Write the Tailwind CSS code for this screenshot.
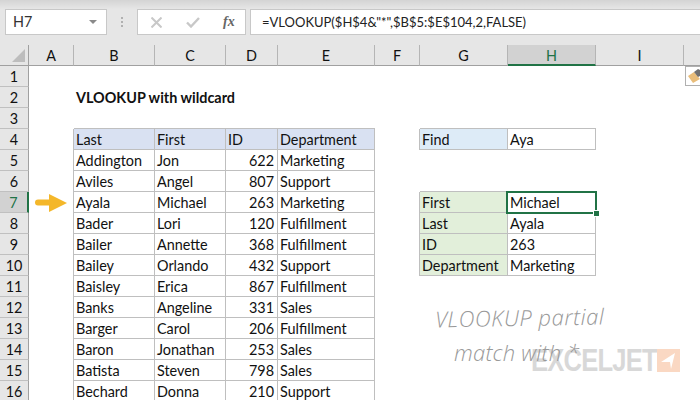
<!DOCTYPE html>
<html><head><meta charset="utf-8"><script src="https://cdn.jsdelivr.net/npm/@tailwindcss/browser@4"></script></head>
<body class="bg-white">
<div class="relative w-[700px] h-[400px] overflow-hidden bg-white text-[#111] font-['Lato','Liberation_Sans',sans-serif] text-[14.4px] leading-[22px]">
  <div class="h-[45px] bg-[#e6e6e6] flex items-start pt-[9px] pl-[5px] gap-[4px] relative">
    <div class="absolute left-0 top-0 w-full h-[9px] bg-gradient-to-b from-[#d4d4d4] to-[#e6e6e6]"></div>
    <div class="relative w-[102px] h-[26px] bg-white border border-[#c8c8c8] flex items-center justify-between pl-[7px] pr-[7px] text-[#333]"><span>H7</span><span class="w-0 h-0 border-l-[4px] border-r-[4px] border-t-[4px] border-l-transparent border-r-transparent border-t-[#8a8a8a] mr-[2px]"></span></div>
    <div class="w-[22px] h-[26px] flex flex-col items-center justify-center gap-[2px]"><i class="w-[2px] h-[2px] bg-[#b0b0b0]"></i><i class="w-[2px] h-[2px] bg-[#b0b0b0]"></i><i class="w-[2px] h-[2px] bg-[#b0b0b0]"></i></div>
    <div class="w-[109px] h-[26px] bg-white border border-[#c8c8c8] flex items-center relative">
      <svg class="absolute left-[13px] top-[7px]" width="11" height="11" viewBox="0 0 11 11"><path d="M0.5 0.5L10.5 10.5M10.5 0.5L0.5 10.5" stroke="#c8c8c8" stroke-width="2"/></svg>
      <svg class="absolute left-[48px] top-[7px]" width="14" height="11" viewBox="0 0 14 11"><path d="M1 5.5L5 9.5L13 1" stroke="#c8c8c8" stroke-width="2.4" fill="none"/></svg>
      <span class="absolute left-[85px] top-[2px] font-['Liberation_Serif',serif] italic font-bold text-[14px] leading-[20px] text-[#666]">fx</span>
    </div>
    <div class="flex-1 h-[26px] bg-white border-y border-l border-[#c8c8c8] pl-[11px] flex items-center text-[#222] text-[13px]">=VLOOKUP($H$4&amp;"*",$B$5:$E$104,2,FALSE)</div>
  </div>
  <div class="grid grid-cols-[29px_45px_81px_71px_52px_97px_45px_88px_88px_88px_16px] auto-rows-[21px]">
    <!-- header -->
    <div class="bg-[#e6e6e6] border-b border-r border-[#a0a0a0] relative"><svg class="absolute left-[12px] top-[4px]" width="13" height="13" viewBox="0 0 13 13"><path d="M13 0V13H0Z" fill="#bdbdbd"/></svg></div>
    <div class="bg-[#e6e6e6] border-b border-r border-b-[#a0a0a0] border-r-[#b5b5b5] text-center">A</div>
    <div class="bg-[#e6e6e6] border-b border-r border-b-[#a0a0a0] border-r-[#b5b5b5] text-center">B</div>
    <div class="bg-[#e6e6e6] border-b border-r border-b-[#a0a0a0] border-r-[#b5b5b5] text-center">C</div>
    <div class="bg-[#e6e6e6] border-b border-r border-b-[#a0a0a0] border-r-[#b5b5b5] text-center">D</div>
    <div class="bg-[#e6e6e6] border-b border-r border-b-[#a0a0a0] border-r-[#b5b5b5] text-center">E</div>
    <div class="bg-[#e6e6e6] border-b border-r border-b-[#a0a0a0] border-r-[#b5b5b5] text-center">F</div>
    <div class="bg-[#e6e6e6] border-b border-r border-b-[#a0a0a0] border-r-[#b5b5b5] text-center">G</div>
    <div class="bg-[#d2d2d2] border-b-2 border-r border-b-[#217346] border-r-[#b5b5b5] text-center text-[#217346]">H</div>
    <div class="bg-[#e6e6e6] border-b border-r border-b-[#a0a0a0] border-r-[#b5b5b5] text-center">I</div>
    <div class="bg-[#e6e6e6] border-b border-b-[#a0a0a0]"></div>
    <!-- 1 -->
    <div class="bg-[#e6e6e6] border-b border-r border-b-[#c0c0c0] border-r-[#a0a0a0] text-center">1</div><div class="col-span-10"></div>
    <!-- 2 -->
    <div class="bg-[#e6e6e6] border-b border-r border-b-[#c0c0c0] border-r-[#a0a0a0] text-center">2</div><div></div><div class="col-span-9 pl-[2px] font-bold">VLOOKUP with wildcard</div>
    <!-- 3 -->
    <div class="bg-[#e6e6e6] border-b border-r border-b-[#c0c0c0] border-r-[#a0a0a0] text-center">3</div><div></div><div class="border-b border-[#bfbfbf]"></div><div class="border-b border-[#bfbfbf]"></div><div class="border-b border-[#bfbfbf]"></div><div class="border-b border-[#bfbfbf]"></div><div></div><div class="border-b border-[#bfbfbf]"></div><div class="border-b border-[#bfbfbf]"></div><div></div><div></div>
    <!-- 4 -->
    <div class="bg-[#e6e6e6] border-b border-r border-b-[#c0c0c0] border-r-[#a0a0a0] text-center">4</div><div class="border-r border-[#bfbfbf]"></div>
    <div class="bg-[#d9e1f2] border-b border-r border-[#bfbfbf] pl-[2px]">Last</div><div class="bg-[#d9e1f2] border-b border-r border-[#bfbfbf] pl-[2px]">First</div><div class="bg-[#d9e1f2] border-b border-r border-[#bfbfbf] pl-[2px]">ID</div><div class="bg-[#d9e1f2] border-b border-r border-[#bfbfbf] pl-[2px]">Department</div>
    <div class="border-r border-[#bfbfbf]"></div><div class="bg-[#ddebf7] border-b border-r border-[#bfbfbf] pl-[2px]">Find</div><div class="border-b border-r border-[#bfbfbf] pl-[2px]">Aya</div><div></div><div></div>
    <!-- 5 -->
    <div class="bg-[#e6e6e6] border-b border-r border-b-[#c0c0c0] border-r-[#a0a0a0] text-center">5</div><div class="border-r border-[#bfbfbf]"></div>
    <div class="border-b border-r border-[#bfbfbf] pl-[2px]">Addington</div><div class="border-b border-r border-[#bfbfbf] pl-[2px]">Jon</div><div class="border-b border-r border-[#bfbfbf] pr-[3px] text-right">622</div><div class="border-b border-r border-[#bfbfbf] pl-[2px]">Marketing</div>
    <div class="col-span-5"></div>
    <!-- 6 -->
    <div class="bg-[#e6e6e6] border-b border-r border-b-[#c0c0c0] border-r-[#a0a0a0] text-center">6</div><div class="border-r border-[#bfbfbf]"></div>
    <div class="border-b border-r border-[#bfbfbf] pl-[2px]">Aviles</div><div class="border-b border-r border-[#bfbfbf] pl-[2px]">Angel</div><div class="border-b border-r border-[#bfbfbf] pr-[3px] text-right">807</div><div class="border-b border-r border-[#bfbfbf] pl-[2px]">Support</div>
    <div></div><div class="border-b border-[#bfbfbf]"></div><div class="border-b border-[#bfbfbf]"></div><div></div><div></div>
    <!-- 7 -->
    <div class="bg-[#d2d2d2] border-r-2 border-b border-b-[#c0c0c0] border-r-[#217346] text-center text-[#217346]">7</div><div class="border-r border-[#bfbfbf]"></div>
    <div class="border-b border-r border-[#bfbfbf] pl-[2px]">Ayala</div><div class="border-b border-r border-[#bfbfbf] pl-[2px]">Michael</div><div class="border-b border-r border-[#bfbfbf] pr-[3px] text-right">263</div><div class="border-b border-r border-[#bfbfbf] pl-[2px]">Marketing</div>
    <div class="border-r border-[#bfbfbf]"></div><div class="bg-[#e2efda] border-b border-r border-[#bfbfbf] pl-[2px]">First</div><div class="border-b border-r border-[#bfbfbf] pl-[2px]">Michael</div><div></div><div></div>
    <!-- 8 -->
    <div class="bg-[#e6e6e6] border-b border-r border-b-[#c0c0c0] border-r-[#a0a0a0] text-center">8</div><div class="border-r border-[#bfbfbf]"></div>
    <div class="border-b border-r border-[#bfbfbf] pl-[2px]">Bader</div><div class="border-b border-r border-[#bfbfbf] pl-[2px]">Lori</div><div class="border-b border-r border-[#bfbfbf] pr-[3px] text-right">120</div><div class="border-b border-r border-[#bfbfbf] pl-[2px]">Fulfillment</div>
    <div class="border-r border-[#bfbfbf]"></div><div class="bg-[#e2efda] border-b border-r border-[#bfbfbf] pl-[2px]">Last</div><div class="border-b border-r border-[#bfbfbf] pl-[2px]">Ayala</div><div></div><div></div>
    <!-- 9 -->
    <div class="bg-[#e6e6e6] border-b border-r border-b-[#c0c0c0] border-r-[#a0a0a0] text-center">9</div><div class="border-r border-[#bfbfbf]"></div>
    <div class="border-b border-r border-[#bfbfbf] pl-[2px]">Bailer</div><div class="border-b border-r border-[#bfbfbf] pl-[2px]">Annette</div><div class="border-b border-r border-[#bfbfbf] pr-[3px] text-right">368</div><div class="border-b border-r border-[#bfbfbf] pl-[2px]">Fulfillment</div>
    <div class="border-r border-[#bfbfbf]"></div><div class="bg-[#e2efda] border-b border-r border-[#bfbfbf] pl-[2px]">ID</div><div class="border-b border-r border-[#bfbfbf] pl-[2px]">263</div><div></div><div></div>
    <!-- 10 -->
    <div class="bg-[#e6e6e6] border-b border-r border-b-[#c0c0c0] border-r-[#a0a0a0] text-center">10</div><div class="border-r border-[#bfbfbf]"></div>
    <div class="border-b border-r border-[#bfbfbf] pl-[2px]">Bailey</div><div class="border-b border-r border-[#bfbfbf] pl-[2px]">Orlando</div><div class="border-b border-r border-[#bfbfbf] pr-[3px] text-right">432</div><div class="border-b border-r border-[#bfbfbf] pl-[2px]">Support</div>
    <div class="border-r border-[#bfbfbf]"></div><div class="bg-[#e2efda] border-b border-r border-[#bfbfbf] pl-[2px]">Department</div><div class="border-b border-r border-[#bfbfbf] pl-[2px]">Marketing</div><div></div><div></div>
    <!-- 11 -->
    <div class="bg-[#e6e6e6] border-b border-r border-b-[#c0c0c0] border-r-[#a0a0a0] text-center">11</div><div class="border-r border-[#bfbfbf]"></div>
    <div class="border-b border-r border-[#bfbfbf] pl-[2px]">Baisley</div><div class="border-b border-r border-[#bfbfbf] pl-[2px]">Erica</div><div class="border-b border-r border-[#bfbfbf] pr-[3px] text-right">867</div><div class="border-b border-r border-[#bfbfbf] pl-[2px]">Fulfillment</div><div class="col-span-5"></div>
    <!-- 12 -->
    <div class="bg-[#e6e6e6] border-b border-r border-b-[#c0c0c0] border-r-[#a0a0a0] text-center">12</div><div class="border-r border-[#bfbfbf]"></div>
    <div class="border-b border-r border-[#bfbfbf] pl-[2px]">Banks</div><div class="border-b border-r border-[#bfbfbf] pl-[2px]">Angeline</div><div class="border-b border-r border-[#bfbfbf] pr-[3px] text-right">331</div><div class="border-b border-r border-[#bfbfbf] pl-[2px]">Sales</div><div class="col-span-5"></div>
    <!-- 13 -->
    <div class="bg-[#e6e6e6] border-b border-r border-b-[#c0c0c0] border-r-[#a0a0a0] text-center">13</div><div class="border-r border-[#bfbfbf]"></div>
    <div class="border-b border-r border-[#bfbfbf] pl-[2px]">Barger</div><div class="border-b border-r border-[#bfbfbf] pl-[2px]">Carol</div><div class="border-b border-r border-[#bfbfbf] pr-[3px] text-right">206</div><div class="border-b border-r border-[#bfbfbf] pl-[2px]">Fulfillment</div><div class="col-span-5"></div>
    <!-- 14 -->
    <div class="bg-[#e6e6e6] border-b border-r border-b-[#c0c0c0] border-r-[#a0a0a0] text-center">14</div><div class="border-r border-[#bfbfbf]"></div>
    <div class="border-b border-r border-[#bfbfbf] pl-[2px]">Baron</div><div class="border-b border-r border-[#bfbfbf] pl-[2px]">Jonathan</div><div class="border-b border-r border-[#bfbfbf] pr-[3px] text-right">253</div><div class="border-b border-r border-[#bfbfbf] pl-[2px]">Sales</div><div class="col-span-5"></div>
    <!-- 15 -->
    <div class="bg-[#e6e6e6] border-b border-r border-b-[#c0c0c0] border-r-[#a0a0a0] text-center">15</div><div class="border-r border-[#bfbfbf]"></div>
    <div class="border-b border-r border-[#bfbfbf] pl-[2px]">Batista</div><div class="border-b border-r border-[#bfbfbf] pl-[2px]">Steven</div><div class="border-b border-r border-[#bfbfbf] pr-[3px] text-right">798</div><div class="border-b border-r border-[#bfbfbf] pl-[2px]">Sales</div><div class="col-span-5"></div>
    <!-- 16 -->
    <div class="bg-[#e6e6e6] border-b border-r border-b-[#c0c0c0] border-r-[#a0a0a0] text-center">16</div><div class="border-r border-[#bfbfbf]"></div>
    <div class="border-b border-r border-[#bfbfbf] pl-[2px]">Bechard</div><div class="border-b border-r border-[#bfbfbf] pl-[2px]">Donna</div><div class="border-b border-r border-[#bfbfbf] pr-[3px] text-right">210</div><div class="border-b border-r border-[#bfbfbf] pl-[2px]">Support</div><div class="col-span-5"></div>
  </div>
  <!-- overlays -->
  <div class="absolute left-[506px] top-[191px] w-[91px] h-[23px] border-2 border-[#217346]"></div>
  <div class="absolute left-[593px] top-[210px] w-[5px] h-[5px] bg-[#217346] border border-white box-content"></div>
  <svg class="absolute left-[35px] top-[194px]" width="32" height="18" viewBox="0 0 32 18"><path d="M3 5.5H14V0L32 9L14 18V11.5H3Q0 11.5 0 8.5Q0 5.5 3 5.5Z" fill="#f4b72a"/></svg>
  <div class="absolute left-[685px] top-[66px] w-[20px] h-[20px] bg-white border border-[#b0b0b0]">
    <svg width="14" height="18" viewBox="0 0 14 18"><path d="M2 9L8 5L14 12L7 16Z" fill="#e9bd7a"/><path d="M8 5L12 2L14 3V9L12 10Z" fill="#707070"/></svg>
  </div>
  <div class="absolute left-[531px] top-[343px] flex items-center">
    <span class="w-[124px] text-[32px] leading-[34px] font-bold font-['Liberation_Sans',sans-serif] text-[#d8d8d8] tracking-[-1px] scale-x-[0.8] origin-left whitespace-nowrap">EXCELJET</span>
    <span class="ml-[2px] mt-[1px] w-[23px] h-[23px] bg-[#fad8c3] relative"><svg class="absolute left-[3px] top-[3px]" width="17" height="17" viewBox="0 0 17 17"><path d="M15 1L1 10L10 10L11 17Z" fill="#fff"/></svg></span>
  </div>
  <div class="absolute left-[435px] top-[303px] text-[22px] leading-[28px] text-[#999] italic font-['Open_Sans',sans-serif] font-light tracking-[0.5px] rotate-[-1deg]">VLOOKUP partial</div>
  <div class="absolute left-[454px] top-[338px] text-[22px] leading-[28px] text-[#999] italic font-['Open_Sans',sans-serif] font-light tracking-[0.2px]">match with *</div>
</div>
</body></html>
